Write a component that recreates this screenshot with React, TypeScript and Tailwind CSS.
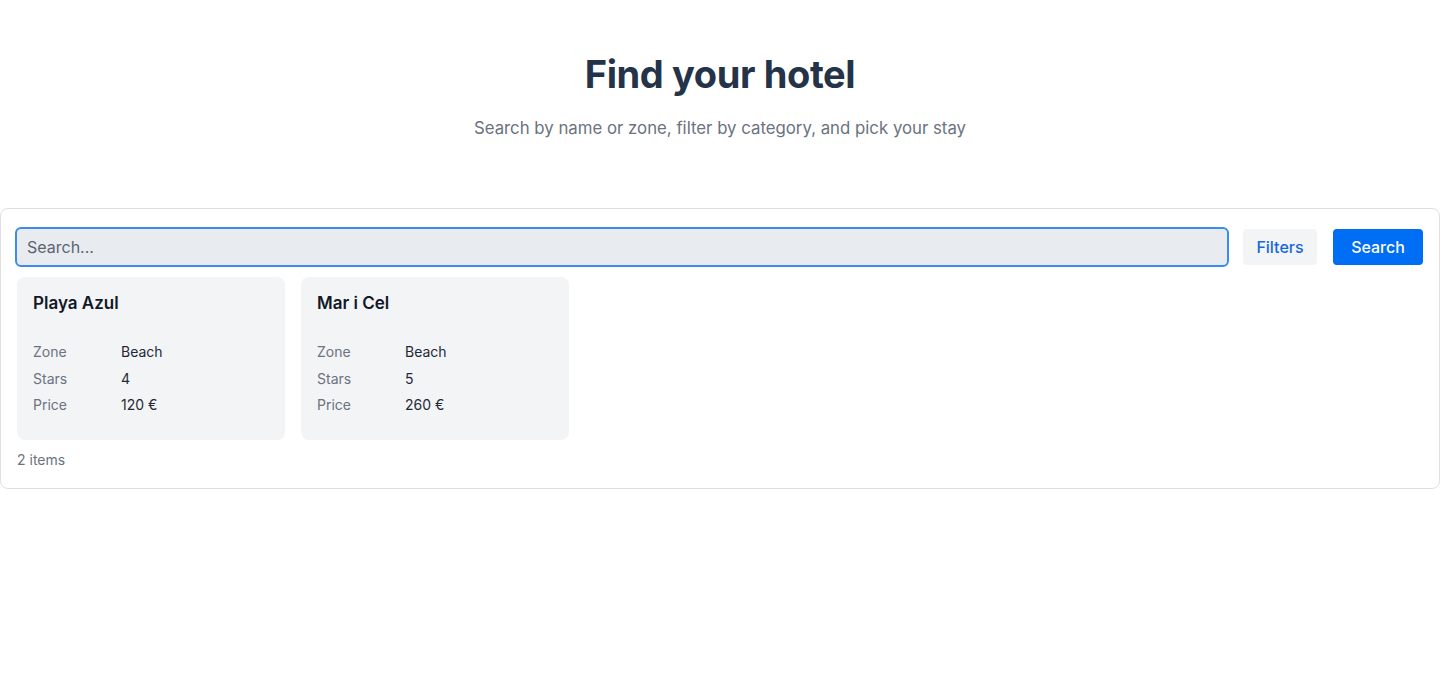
import { useState } from 'react';

interface Hotel {
  name: string;
  zone: string;
  stars: number;
  price: number;
}

const hotels: Hotel[] = [
  { name: 'Playa Azul', zone: 'Beach', stars: 4, price: 120 },
  { name: 'Mar i Cel', zone: 'Beach', stars: 5, price: 260 },
];

function HotelCard({ hotel }: { hotel: Hotel }) {
  const rows: [string, string][] = [
    ['Zone', hotel.zone],
    ['Stars', String(hotel.stars)],
    ['Price', `${hotel.price} €`],
  ];
  return (
    <div className="w-[268px] h-[163px] rounded-lg bg-[#f3f4f6] px-4 pt-[14px]">
      <h3 className="text-[17px] leading-6 font-semibold text-[#111827]">{hotel.name}</h3>
      <dl className="mt-[27px] grid grid-cols-[88px_1fr] gap-y-[6.5px] text-sm leading-5">
        {rows.map(([k, v]) => (
          <div key={k} className="contents">
            <dt className="text-[#6b7280]">{k}</dt>
            <dd className="text-[#1f2937]">{v}</dd>
          </div>
        ))}
      </dl>
    </div>
  );
}

export default function App() {
  const [query, setQuery] = useState('');

  return (
    <div className="min-h-[700px] bg-white font-['Inter',sans-serif]">
      <header className="pt-[51px] text-center">
        <h1 className="text-[38px] leading-[46px] font-bold text-[#243347] tracking-[-0.01em]">Find your hotel</h1>
        <p className="mt-[19px] text-[16.8px] leading-6 text-[#6b7280]">
          Search by name or zone, filter by category, and pick your stay
        </p>
      </header>

      <section className="mt-[68px] border border-[#dcdfe4] rounded-lg px-4 pt-[18px] pb-[18px]">
        <div className="flex items-center">
          <input
            value={query}
            onChange={(e) => setQuery(e.target.value)}
            placeholder="Search..."
            className="flex-1 h-[40px] -ml-[2px] rounded-md border-2 border-[#3b8cf0] bg-[#e8ebf0] px-[10px] text-[16px] text-[#1f2937] placeholder:text-[#5b6472] outline-none"
          />
          <button className="ml-[14px] h-9 w-[74px] rounded bg-[#f3f4f6] text-[16px] font-medium text-[#1668dc]">
            Filters
          </button>
          <button className="ml-4 h-9 w-[90px] rounded bg-[#006df5] text-[16px] font-medium text-white">
            Search
          </button>
        </div>

        <div className="mt-[10px] flex gap-4">
          {hotels.map((h) => (
            <HotelCard key={h.name} hotel={h} />
          ))}
        </div>

        <p className="mt-[10px] text-sm leading-5 text-[#6b7280]">{hotels.length} items</p>
      </section>
    </div>
  );
}
